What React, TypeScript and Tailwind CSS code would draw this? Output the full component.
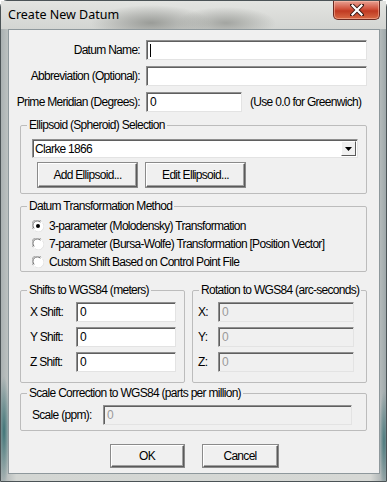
import React from "react"

const ui = "font-['Liberation_Sans',Arial,sans-serif] text-[12px] tracking-[-0.7px] leading-[14px] text-black whitespace-nowrap"

function TextBox({ width, value, disabled, caret }: { width: number; value?: string; disabled?: boolean; caret?: boolean }) {
  return (
    <div
      className={`flex h-[20px] items-center border border-t-[#8f8f8f] border-l-[#8f8f8f] border-r-[#e3e3e3] border-b-[#e3e3e3] pl-[3px] shadow-[inset_1px_1px_0_#5f5f5f] ${
        disabled ? "bg-[#f0f0f0] text-[#9a9a9a]" : "bg-white"
      }`}
      style={{ width }}
    >
      {caret && <span className="h-[13px] w-px bg-black" />}
      {value}
    </div>
  )
}

function Button({ width, height, children }: { width: number; height: number; children: React.ReactNode }) {
  return (
    <div
      className="flex items-center justify-center border border-t-white border-l-white border-r-[#5a5a5a] border-b-[#5a5a5a] bg-[#f0f0f0] shadow-[inset_-1px_-1px_0_#a0a0a0,0_0_0_1px_#8a8a8a]"
      style={{ width, height }}
    >
      {children}
    </div>
  )
}

function Radio({ checked, label }: { checked?: boolean; label: string }) {
  return (
    <div className="flex h-[18px] items-center gap-[5px]">
      <svg width="12" height="12" viewBox="0 0 12 12">
        <circle cx="6" cy="6" r="5.5" fill="#ffffff" />
        <path d="M1.2 9.2 A5.4 5.4 0 0 1 9.2 1.2" fill="none" stroke="#a0a0a0" strokeWidth="1" />
        <path d="M2.2 8.4 A4.3 4.3 0 0 1 8.4 2.2" fill="none" stroke="#6a6a6a" strokeWidth="1" />
        <path d="M10.6 3 A5.4 5.4 0 0 1 3 10.6" fill="none" stroke="#e3e3e3" strokeWidth="1" />
        {checked && <circle cx="6" cy="6" r="2" fill="#000" />}
      </svg>
      <span>{label}</span>
    </div>
  )
}

function Group({ title, width, className = "", children }: { title: string; width: number; className?: string; children: React.ReactNode }) {
  return (
    <fieldset className={`rounded-[2px] border border-[#bcbcbc] ${className}`} style={{ width }}>
      <legend className="ml-[6px] px-[2px] leading-[14px]">{title}</legend>
      {children}
    </fieldset>
  )
}

export default function App() {
  return (
    <div className={`${ui} h-[482px] w-[387px] overflow-hidden`}>
      <div className="flex h-full w-full flex-col rounded-t-[7px] border border-[#4b5356] bg-[radial-gradient(ellipse_6px_55px_at_3px_430px,#3f7477,transparent),radial-gradient(ellipse_5px_50px_at_383px_440px,#4d7b7e,transparent),linear-gradient(90deg,#aab1b2_0%,#d3d6d3_4%,#d6d8d5_96%,#9fa8aa_100%)] pr-[6px] pb-[7px] pl-[7px]">
        {/* title bar */}
        <div className="-mx-[7px] -mr-[6px] flex h-[28px] items-start justify-between bg-[radial-gradient(ellipse_60px_18px_at_150px_22px,#9a9c98,transparent),radial-gradient(ellipse_50px_16px_at_225px_22px,#a3a5a1,transparent),linear-gradient(#e3e4e1,#d3d5d2)] pr-[6px]">
          <span className="pt-[6px] pl-[7px] font-['Segoe_UI','Noto_Sans',sans-serif] text-[12.5px] leading-[16px] tracking-normal text-black">Create New Datum</span>
          <div className="flex h-[19px] w-[47px] items-center justify-center rounded-b-[5px] border border-t-0 border-[#6b2a22] bg-[linear-gradient(#e8a193_0%,#d0503a_45%,#c03a22_55%,#d86a45_100%)] shadow-[inset_0_0_0_1px_rgba(255,200,180,0.5)]">
            <svg width="14" height="12" viewBox="0 0 14 12">
              <path d="M2 1 L12 11 M12 1 L2 11" stroke="#3b1a14" strokeWidth="4" strokeLinecap="square" />
              <path d="M2.5 1.5 L11.5 10.5 M11.5 1.5 L2.5 10.5" stroke="#ffffff" strokeWidth="2.2" strokeLinecap="square" />
            </svg>
          </div>
        </div>

        {/* client area */}
        <div className="flex-1 border border-[#8e989c] bg-[#f0f0f0]">
          <div className="mt-[10px] flex flex-col gap-[6px]">
            <div className="flex items-center">
              <span className="w-[131px] text-right">Datum Name:</span>
              <div className="ml-[6px]">
                <TextBox width={221} caret />
              </div>
            </div>
            <div className="flex items-center">
              <span className="w-[131px] text-right">Abbreviation (Optional):</span>
              <div className="ml-[6px]">
                <TextBox width={221} />
              </div>
            </div>
            <div className="flex items-center">
              <span className="w-[131px] text-right">Prime Meridian (Degrees):</span>
              <div className="ml-[6px]">
                <TextBox width={96} value="0" />
              </div>
              <span className="ml-[8px]">(Use 0.0 for Greenwich)</span>
            </div>
          </div>

          <Group title="Ellipsoid (Spheroid) Selection" width={347} className="mt-[6px] ml-[11px]">
            <div className="pt-[7px] pb-[6px] pl-[11px]">
              <div className="flex h-[19px] w-[326px] items-center justify-between border border-t-[#8f8f8f] border-l-[#8f8f8f] border-r-[#e3e3e3] border-b-[#e3e3e3] bg-white pl-[2px] shadow-[inset_1px_1px_0_#5f5f5f]">
                <span>Clarke 1866</span>
                <div className="mr-px flex h-[15px] w-[15px] items-center justify-center border border-t-white border-l-white border-r-[#5a5a5a] border-b-[#5a5a5a] bg-[#f0f0f0]">
                  <svg width="7" height="4" viewBox="0 0 7 4">
                    <path d="M0 0 H7 L3.5 4 Z" fill="#000" />
                  </svg>
                </div>
              </div>
              <div className="mt-[5px] flex gap-[9px] pl-[6px]">
                <Button width={99} height={24}>Add Ellipsoid...</Button>
                <Button width={99} height={24}>Edit Ellipsoid...</Button>
              </div>
            </div>
          </Group>

          <Group title="Datum Transformation Method" width={347} className="mt-[5px] ml-[11px]">
            <div className="pt-[4px] pl-[11px]">
              <Radio checked label="3-parameter (Molodensky) Transformation" />
              <Radio label="7-parameter (Bursa-Wolfe) Transformation [Position Vector]" />
              <Radio label="Custom Shift Based on Control Point File" />
            </div>
          </Group>

          <div className="mt-[11px] ml-[11px] flex gap-[7px]">
            <Group title="Shifts to WGS84 (meters)" width={165}>
              <div className="flex flex-col gap-[5px] pt-[5px] pb-[10px] pl-[9px]">
                {["X Shift:", "Y Shift:", "Z Shift:"].map((l) => (
                  <div key={l} className="flex items-center">
                    <span className="w-[46px]">{l}</span>
                    <TextBox width={100} value="0" />
                  </div>
                ))}
              </div>
            </Group>
            <Group title="Rotation to WGS84 (arc-seconds)" width={175}>
              <div className="flex flex-col gap-[5px] pt-[5px] pb-[10px] pl-[5px]">
                {["X:", "Y:", "Z:"].map((l) => (
                  <div key={l} className="flex items-center">
                    <span className="w-[20px]">{l}</span>
                    <TextBox width={136} value="0" disabled />
                  </div>
                ))}
              </div>
            </Group>
          </div>

          <Group title="Scale Correction to WGS84 (parts per million)" width={347} className="mt-[3px] ml-[11px]">
            <div className="flex items-center pt-[5px] pb-[5px] pl-[11px]">
              <span className="w-[71px]">Scale (ppm):</span>
              <TextBox width={249} value="0" disabled />
            </div>
          </Group>

          <div className="mt-[14px] flex justify-center gap-[19px]">
            <Button width={73} height={22}>OK</Button>
            <Button width={75} height={22}>Cancel</Button>
          </div>
        </div>
      </div>
    </div>
  )
}
